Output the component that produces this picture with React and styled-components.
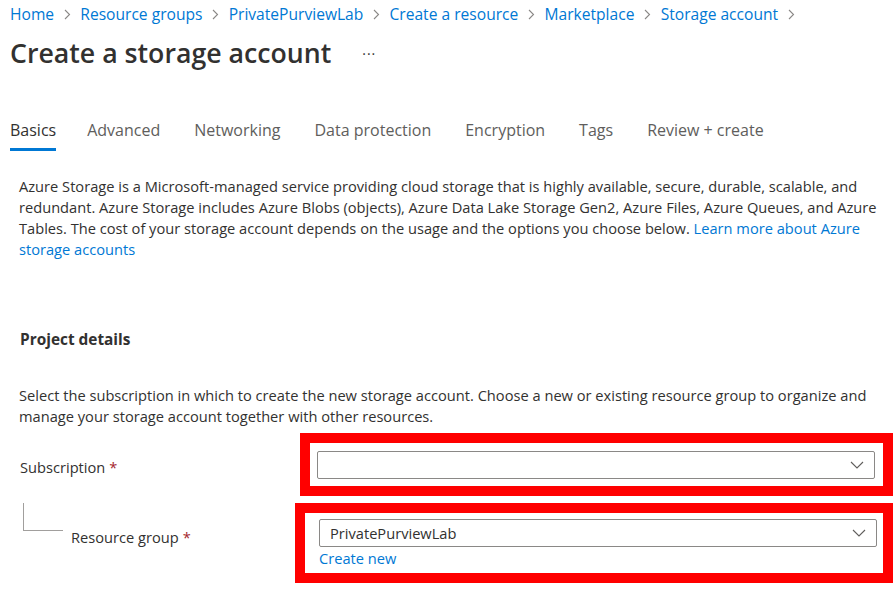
import React from "react";
import styled, { createGlobalStyle } from "styled-components";

const Global = createGlobalStyle`
  html, body { margin: 0; padding: 0; background: #fff; }
  body { font-family: "Open Sans", "Noto Sans", sans-serif; color: #323130; }
  * { box-sizing: border-box; }
`;

const Page = styled.div`
  width: 896px;
  height: 616px;
  overflow: hidden;
  padding: 4px 0 0 10px;
`;

const Breadcrumb = styled.nav`
  display: flex;
  align-items: center;
  gap: 9.6px;
  height: 20px;
  font-size: 15.6px;
  line-height: 20px;
`;

const Crumb = styled.a`
  color: #0078d4;
  text-decoration: none;
  white-space: nowrap;
`;

const Chevron = () => (
  <svg width="7" height="11" viewBox="0 0 7 11">
    <path d="M1 1 L5.5 5.5 L1 10" fill="none" stroke="#8a8886" strokeWidth="1.1" />
  </svg>
);

const TitleRow = styled.div`
  display: flex;
  align-items: center;
  margin-top: 11px;
  height: 36px;
`;

const Title = styled.h1`
  margin: 0;
  font-size: 26.7px;
  font-weight: 600;
  line-height: 36px;
  color: #323130;
`;

const More = styled.span`
  margin-left: 31px;
  font-size: 14px;
  color: #323130;
  letter-spacing: 1px;
`;

const Tabs = styled.div`
  display: flex;
  gap: 34px;
  margin-top: 48px;
`;

const Tab = styled.div`
  font-size: 16px;
  line-height: 22px;
  padding-bottom: 7px;
  margin-right: ${(p) => (p.$active ? -3 : 0)}px;
  color: ${(p) => (p.$active ? "#323130" : "#605e5c")};
  border-bottom: 3px solid ${(p) => (p.$active ? "#0078d4" : "transparent")};
  white-space: nowrap;
`;

const Content = styled.div`
  padding: 0 0 0 9px;
`;

const Para = styled.p`
  margin: ${(p) => p.$mt}px 0 0 0;
  width: 861px;
  font-size: 14.65px;
  line-height: 21px;
  color: #323130;
`;

const Link = styled.a`
  color: #0078d4;
  text-decoration: none;
`;

const SectionTitle = styled.h2`
  margin: 69px 0 0 1px;
  font-size: 15.4px;
  font-weight: 700;
  line-height: 22px;
  color: #323130;
`;

const FieldRow = styled.div`
  display: flex;
  align-items: flex-start;
  margin-top: ${(p) => p.$mt}px;
  padding-left: 1px;
`;

const LabelCell = styled.div`
  flex: 0 0 ${(p) => p.$w}px;
  display: flex;
  align-items: flex-start;
  font-size: 14.65px;
  line-height: 21px;
  color: #323130;
  padding-top: ${(p) => p.$pt}px;
`;

const Required = styled.span`
  color: #a4262c;
  margin-left: 4px;
`;

const Connector = styled.div`
  flex: 0 0 40px;
  height: 28px;
  margin-left: 3px;
  margin-top: -${(p) => p.$pt}px;
  border-left: 1px solid #a19f9d;
  border-bottom: 1px solid #a19f9d;
`;

const IndentLabel = styled.span`
  margin-left: 8px;
`;

const Highlight = styled.div`
  width: ${(p) => p.$w}px;
  border: 10px solid #ff0000;
  padding: ${(p) => p.$pad};
  display: flex;
  flex-direction: column;
`;

const Select = styled.div`
  height: 28px;
  border: 1px solid #8a8886;
  border-radius: 2px;
  display: flex;
  align-items: center;
  justify-content: space-between;
  padding: 0 10px 0 10px;
  font-size: 14.65px;
  color: #323130;
`;

const CreateNew = styled.a`
  color: #0078d4;
  font-size: 14.65px;
  line-height: 21px;
  margin-top: 1px;
`;

const Caret = () => (
  <svg width="14" height="8" viewBox="0 0 14 8">
    <path d="M1 1 L7 7 L13 1" fill="none" stroke="#605e5c" strokeWidth="1.1" />
  </svg>
);

const crumbs = ["Home", "Resource groups", "PrivatePurviewLab", "Create a resource", "Marketplace", "Storage account"];
const tabs = ["Basics", "Advanced", "Networking", "Data protection", "Encryption", "Tags", "Review + create"];

export default function App() {
  return (
    <>
      <Global />
      <Page>
        <Breadcrumb>
          {crumbs.map((c) => (
            <React.Fragment key={c}>
              <Crumb>{c}</Crumb>
              <Chevron />
            </React.Fragment>
          ))}
        </Breadcrumb>
        <TitleRow>
          <Title>Create a storage account</Title>
          <More>···</More>
        </TitleRow>
        <Tabs>
          {tabs.map((t, i) => (
            <Tab key={t} $active={i === 0}>{t}</Tab>
          ))}
        </Tabs>
        <Content>
          <Para $mt={25}>
            Azure Storage is a Microsoft-managed service providing cloud storage that is highly available, secure, durable, scalable, and redundant. Azure Storage includes Azure Blobs (objects), Azure Data Lake Storage Gen2, Azure Files, Azure Queues, and Azure Tables. The cost of your storage account depends on the usage and the options you choose below.{" "}
            <Link>Learn more about Azure storage accounts</Link>
          </Para>
          <SectionTitle>Project details</SectionTitle>
          <Para $mt={34}>
            Select the subscription in which to create the new storage account. Choose a new or existing resource group to organize and manage your storage account together with other resources.
          </Para>
          <FieldRow $mt={6}>
            <LabelCell $w={280} $pt={24}>
              Subscription<Required>*</Required>
            </LabelCell>
            <Highlight $w={593} $pad="8px 8px 7px 7px">
              <Select>
                <span />
                <Caret />
              </Select>
            </Highlight>
          </FieldRow>
          <FieldRow $mt={7}>
            <LabelCell $w={275} $pt={24}>
              <Connector $pt={24} />
              <IndentLabel>
                Resource group<Required>*</Required>
              </IndentLabel>
            </LabelCell>
            <Highlight $w={598} $pad="6px 6px 4px 14px">
              <Select>
                <span>PrivatePurviewLab</span>
                <Caret />
              </Select>
              <CreateNew>Create new</CreateNew>
            </Highlight>
          </FieldRow>
        </Content>
      </Page>
    </>
  );
}
